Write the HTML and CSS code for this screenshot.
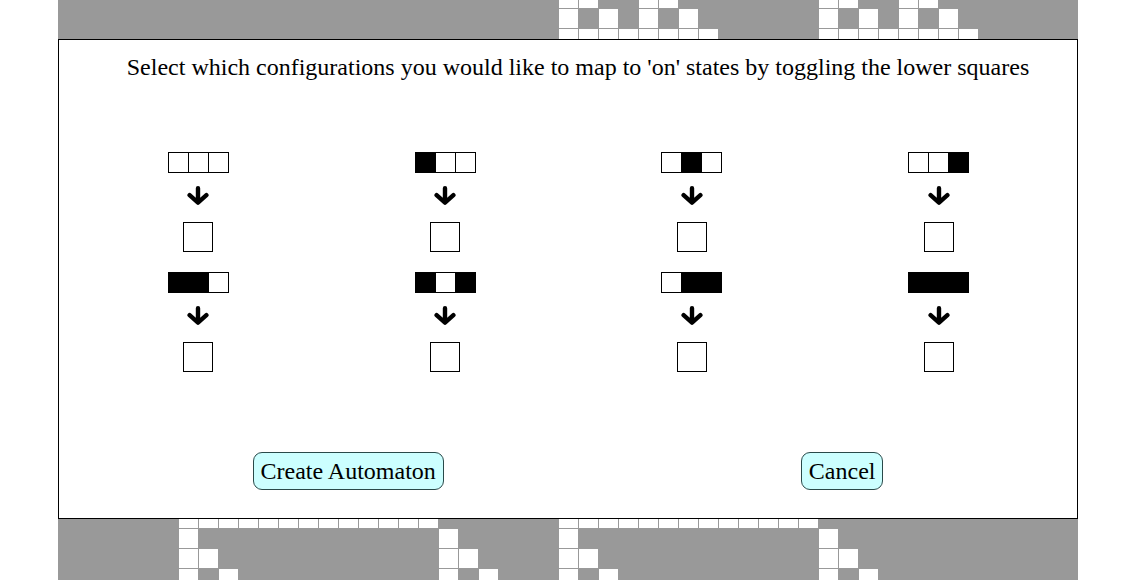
FILE: index.html
```html
<!DOCTYPE html>
<html lang="en">
<head>
<meta charset="utf-8">
<title>Automaton rules</title>
<link rel="stylesheet" href="styles.css">
</head>
<body>
<div class="stage">
  <div class="board" id="board"></div>
  <div class="modal">
    <p class="title">Select which configurations you would like to map to 'on' states by toggling the lower squares</p>
    <div class="rules">
      <div class="rule"><div class="pattern"><span class="cell"></span><span class="cell"></span><span class="cell"></span></div><svg class="arrow" viewBox="0 0 22 20" width="22" height="20"><path d="M11 3.2V16.5M2.6 10.2L11 17.6L19.4 10.2"/></svg><div class="out"></div></div>
      <div class="rule"><div class="pattern"><span class="cell on"></span><span class="cell"></span><span class="cell"></span></div><svg class="arrow" viewBox="0 0 22 20" width="22" height="20"><path d="M11 3.2V16.5M2.6 10.2L11 17.6L19.4 10.2"/></svg><div class="out"></div></div>
      <div class="rule"><div class="pattern"><span class="cell"></span><span class="cell on"></span><span class="cell"></span></div><svg class="arrow" viewBox="0 0 22 20" width="22" height="20"><path d="M11 3.2V16.5M2.6 10.2L11 17.6L19.4 10.2"/></svg><div class="out"></div></div>
      <div class="rule"><div class="pattern"><span class="cell"></span><span class="cell"></span><span class="cell on"></span></div><svg class="arrow" viewBox="0 0 22 20" width="22" height="20"><path d="M11 3.2V16.5M2.6 10.2L11 17.6L19.4 10.2"/></svg><div class="out"></div></div>
      <div class="rule"><div class="pattern"><span class="cell on"></span><span class="cell on"></span><span class="cell"></span></div><svg class="arrow" viewBox="0 0 22 20" width="22" height="20"><path d="M11 3.2V16.5M2.6 10.2L11 17.6L19.4 10.2"/></svg><div class="out"></div></div>
      <div class="rule"><div class="pattern"><span class="cell on"></span><span class="cell"></span><span class="cell on"></span></div><svg class="arrow" viewBox="0 0 22 20" width="22" height="20"><path d="M11 3.2V16.5M2.6 10.2L11 17.6L19.4 10.2"/></svg><div class="out"></div></div>
      <div class="rule"><div class="pattern"><span class="cell"></span><span class="cell on"></span><span class="cell on"></span></div><svg class="arrow" viewBox="0 0 22 20" width="22" height="20"><path d="M11 3.2V16.5M2.6 10.2L11 17.6L19.4 10.2"/></svg><div class="out"></div></div>
      <div class="rule"><div class="pattern"><span class="cell on"></span><span class="cell on"></span><span class="cell on"></span></div><svg class="arrow" viewBox="0 0 22 20" width="22" height="20"><path d="M11 3.2V16.5M2.6 10.2L11 17.6L19.4 10.2"/></svg><div class="out"></div></div>
    </div>
    <div class="actions">
      <button class="btn" type="button">Create Automaton</button>
      <button class="btn" type="button">Cancel</button>
    </div>
  </div>
</div>
<script src="board.js"></script>
</body>
</html>
```

FILE: styles.css
```css
html, body {
  margin: 0;
  padding: 0;
  height: 580px;
  overflow: hidden;
  background: #ffffff;
}

body {
  font-family: "Liberation Serif", "Times New Roman", serif;
  color: #000;
}

.stage {
  position: relative;
  width: 1020px;
  margin-left: 58px;
}

.board {
  display: grid;
  grid-template-columns: repeat(51, 19px);
  grid-template-rows: 8px repeat(29, 19px);
  gap: 1px;
  padding-left: 1px;
  width: 1020px;
  box-sizing: border-box;
  background: #999999;
}

.board .live {
  background: #ffffff;
}

.modal {
  position: absolute;
  top: 39px;
  left: 0;
  width: 1020px;
  height: 480px;
  box-sizing: border-box;
  border: 1px solid #000;
  background: #fff;
  padding: 15px;
}

.title {
  margin: 0 0 0 20px;
  font-size: 24px;
  line-height: 24px;
  text-align: center;
}

.rules {
  display: grid;
  grid-template-columns: repeat(4, 1fr);
  row-gap: 20px;
  margin-top: 73px;
  padding-left: 1px;
}

.rule {
  display: flex;
  flex-direction: column;
  align-items: center;
}

.pattern {
  display: flex;
}

.cell {
  width: 19px;
  height: 19px;
  border: 1px solid #000;
  background: #fff;
}

.cell + .cell {
  border-left: none;
}

.cell.on {
  background: #000;
}

.arrow {
  display: block;
  margin-top: 12px;
  fill: none;
  stroke: #000;
  stroke-width: 4.4;
  stroke-linecap: round;
  stroke-linejoin: round;
}

.out {
  width: 30px;
  height: 30px;
  box-sizing: border-box;
  border: 1px solid #000;
  background: #fff;
  margin-top: 17px;
}

.actions {
  display: flex;
  justify-content: space-around;
  margin-top: 80px;
}

.btn {
  font-family: "Liberation Serif", "Times New Roman", serif;
  font-size: 24px;
  line-height: 28px;
  color: #000;
  background: #ccffff;
  border: 1px solid #2a4a4a;
  border-radius: 9px;
  padding: 4px 7px;
  margin: 0;
}
```

FILE: board.js
```js
(function () {
  var live = {
    0: [25, 26, 29, 30, 38, 39, 42, 43],
    1: [25, 27, 29, 31, 38, 40, 42, 44],
    2: [[25, 32], [38, 45]],
    26: [[6, 18], [25, 37]],
    27: [6, 19, 25, 38],
    28: [6, 7, 19, 20, 25, 26, 38, 39],
    29: [6, 8, 19, 21, 25, 27, 38, 40]
  };
  var board = document.getElementById('board');
  Object.keys(live).forEach(function (r) {
    live[r].forEach(function (c) {
      var from = Array.isArray(c) ? c[0] : c;
      var to = Array.isArray(c) ? c[1] : c;
      for (var k = from; k <= to; k++) {
        var cell = document.createElement('i');
        cell.className = 'live';
        cell.style.gridArea = (Number(r) + 1) + ' / ' + (k + 1);
        board.appendChild(cell);
      }
    });
  });
})();
```
